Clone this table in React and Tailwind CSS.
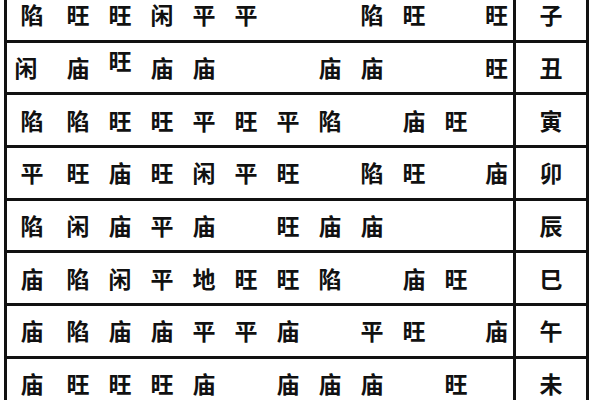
import React from "react";

const rows = [
  { b: "子", c: ["陷", "旺", "旺", "闲", "平", "平", "", "", "陷", "旺", "", "旺"] },
  { b: "丑", c: ["闲", "庙", "旺", "庙", "庙", "", "", "庙", "庙", "", "", "旺"] },
  { b: "寅", c: ["陷", "陷", "旺", "旺", "平", "旺", "平", "陷", "", "庙", "旺", ""] },
  { b: "卯", c: ["平", "旺", "庙", "旺", "闲", "平", "旺", "", "陷", "旺", "", "庙"] },
  { b: "辰", c: ["陷", "闲", "庙", "平", "庙", "", "旺", "庙", "庙", "", "", ""] },
  { b: "巳", c: ["庙", "陷", "闲", "平", "地", "旺", "旺", "陷", "", "庙", "旺", ""] },
  { b: "午", c: ["庙", "陷", "庙", "庙", "平", "平", "庙", "", "平", "旺", "", "庙"] },
  { b: "未", c: ["庙", "旺", "旺", "旺", "庙", "", "庙", "庙", "庙", "", "旺", ""] },
];

export default function App() {
  return (
    <div
      className="w-[600px] h-[400px] overflow-hidden bg-white text-[#111]"
      style={{ fontFamily: '"Noto Sans CJK SC", "Noto Sans", sans-serif' }}
    >
      <div className="ml-[4px] mt-[-13px] w-[585px] border-l-[3px] border-r-[3px] border-[#111]">
        {rows.map((r, ri) => (
          <div key={ri} className="flex h-[52.67px] border-t-[3px] border-[#111]">
            <div className="grid grid-cols-[50px_repeat(10,42px)_39px] w-[509px] border-r-[3px] border-[#111]">
              {r.c.map((ch, ci) => {
                let extra = "";
                if (ri === 1 && ci === 0) extra = "mr-[12px]";
                if (ri === 1 && ci === 2) extra = "mb-[14px]";
                return (
                  <div key={ci} className="flex items-center justify-center">
                    <span className={"text-[23px] font-bold leading-none " + extra}>{ch}</span>
                  </div>
                );
              })}
            </div>
            <div className="flex-1 flex items-center justify-center">
              <span className="text-[23px] font-bold leading-none">{r.b}</span>
            </div>
          </div>
        ))}
      </div>
    </div>
  );
}
